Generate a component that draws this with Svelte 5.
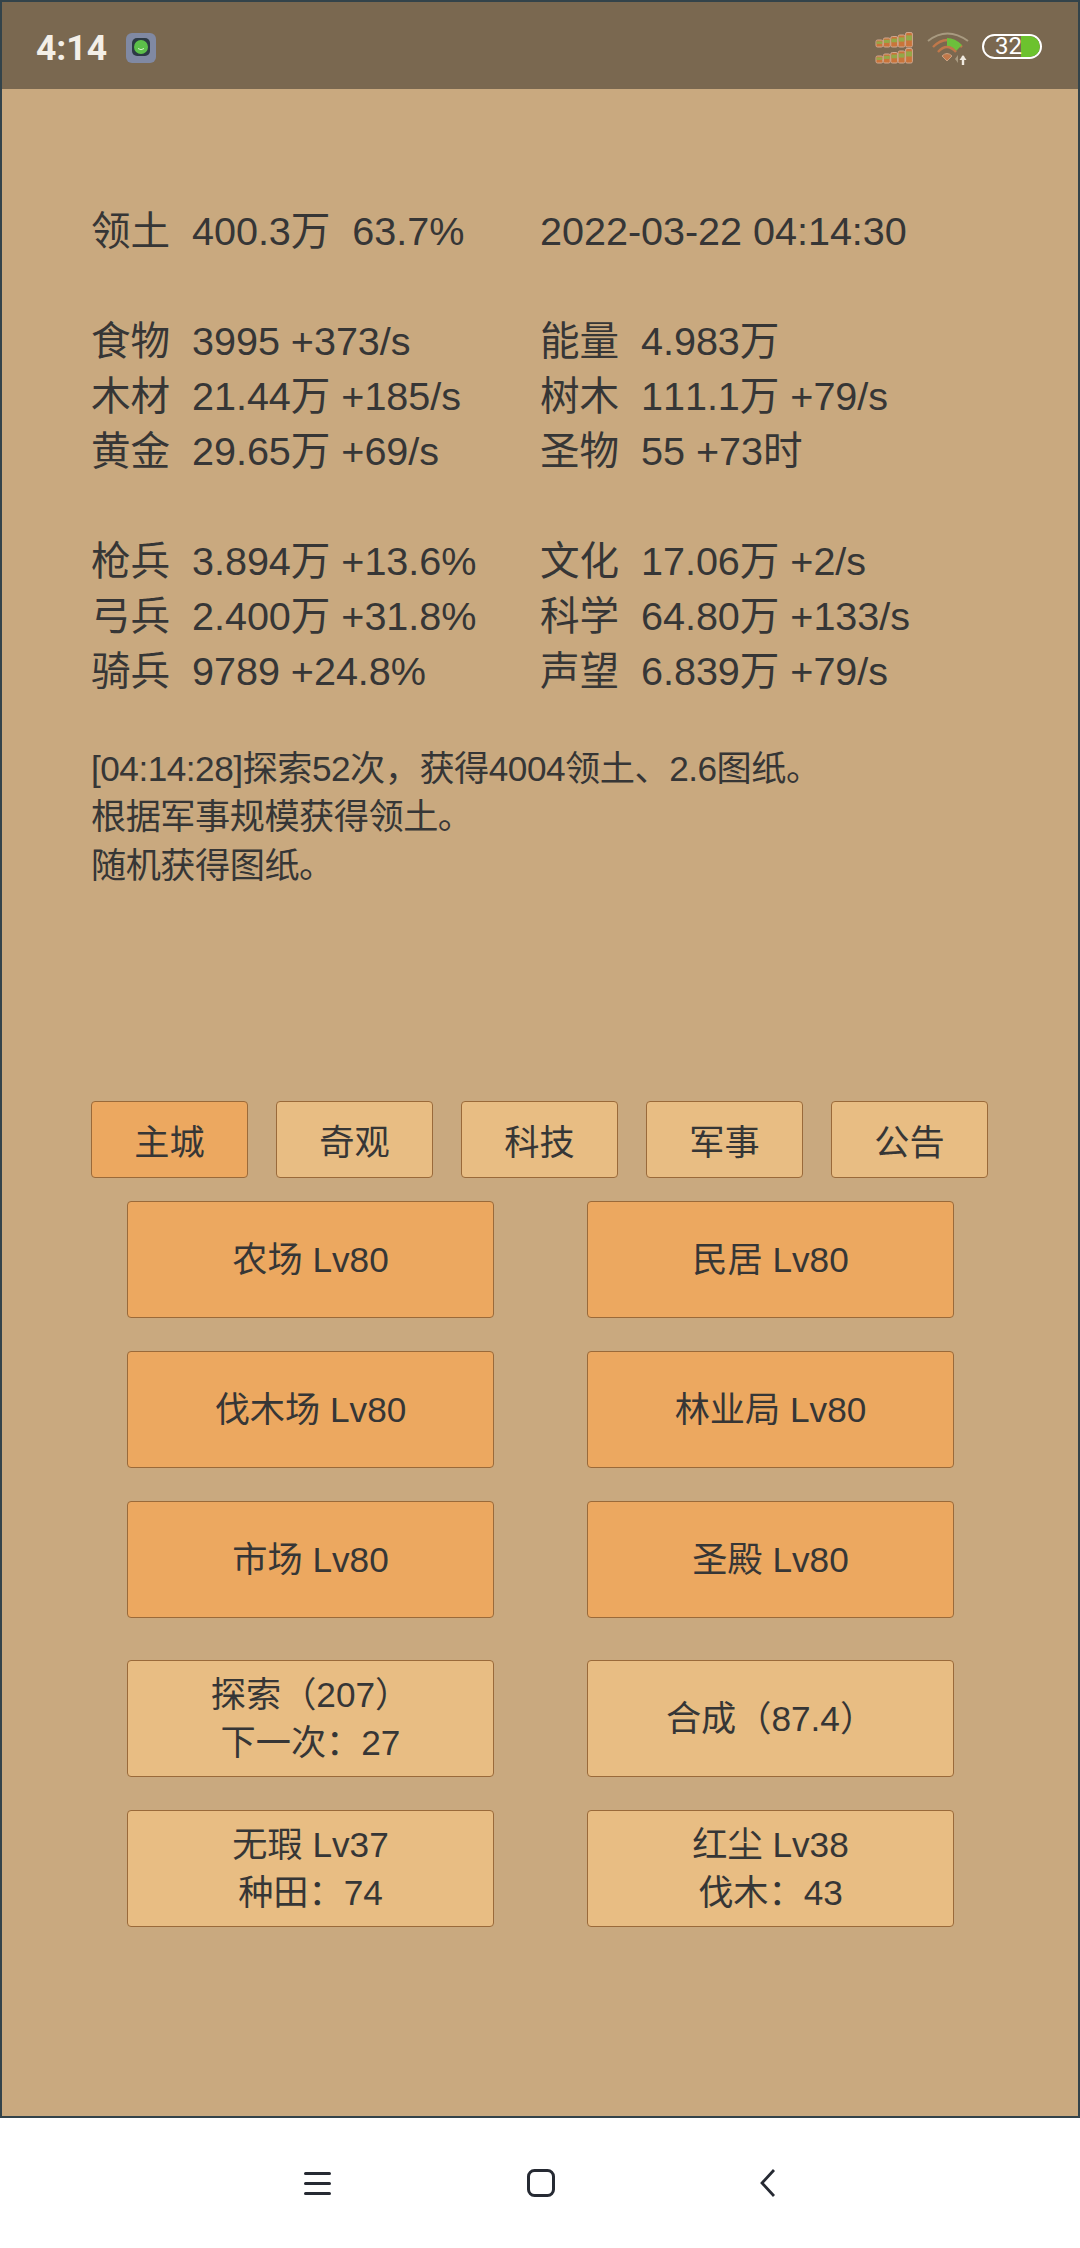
<script>
  const topRows = [
    [["食物", "3995 +373/s"], ["能量", "4.983万"]],
    [["木材", "21.44万 +185/s"], ["树木", "111.1万 +79/s"]],
    [["黄金", "29.65万 +69/s"], ["圣物", "55 +73时"]],
  ];
  const armyRows = [
    [["枪兵", "3.894万 +13.6%"], ["文化", "17.06万 +2/s"]],
    [["弓兵", "2.400万 +31.8%"], ["科学", "64.80万 +133/s"]],
    [["骑兵", "9789 +24.8%"], ["声望", "6.839万 +79/s"]],
  ];
  const tabs = ["主城", "奇观", "科技", "军事", "公告"];
  const buildings = ["农场 Lv80", "民居 Lv80", "伐木场 Lv80", "林业局 Lv80", "市场 Lv80", "圣殿 Lv80"];
  let active = "主城";
</script>

<div class="page">
  <div class="game">
    <header class="statusbar">
      <span class="time">4:14</span>
      <svg class="appicon" width="30" height="30" viewBox="0 0 30 30">
        <rect width="30" height="30" rx="6" fill="#8089a3" />
        <rect x="6" y="5" width="18" height="18" rx="5" fill="#2c3a44" />
        <circle cx="15" cy="14" r="7" fill="#5cc04a" />
        <path d="M12 15.5q3 2.5 6 0" stroke="#d8f5c8" stroke-width="1" fill="none" />
      </svg>
      <div class="status-right">
        <svg width="40" height="32" viewBox="0 0 40 32">
          {#each [0, 16] as dy}
            {#each [7, 9, 10.5, 12, 14.5] as h, i}
              <rect x={i * 7.4 + 1} y={15 - h + dy} width="6.8" height={h} rx="1.5" fill="#c9743a" stroke="#d0a890" stroke-width="1" />
              <rect x={i * 7.4 + 1.5} y={15 - h + dy + h * 0.2} width="5.8" height={h * 0.35} fill="#93a848" />
            {/each}
          {/each}
        </svg>
        <svg class="wifi" width="44" height="36" viewBox="0 0 44 36">
          <path d="M2 11Q21 -4 42 11" stroke="#a89a80" stroke-width="2" fill="none" />
          <path d="M7 17Q21 3 36 17" stroke="#c0784a" stroke-width="2.4" fill="none" />
          <path d="M21 8Q29 8 36 15L30 21Q26 16 21 16Z" fill="#6cbf3c" />
          <path d="M12 22Q21 12 30 22" stroke="#c0784a" stroke-width="2.4" fill="none" />
          <path d="M16 26Q21 21 26 26L21 31Z" fill="#c0784a" stroke="#c9a080" />
          <path d="M37 26v9" stroke="#efe9df" stroke-width="2.4" />
          <path d="M37 25l3.5 5h-7z" fill="#efe9df" />
          <path d="M32 25v8l-3-4z" fill="#a89a80" />
        </svg>
        <div class="battery"><i></i><span>32</span></div>
      </div>
    </header>

    <main class="content">
      <div class="stats">
        <div class="row">
          <pre>领土  400.3万  63.7%</pre>
          <pre>2022-03-22 04:14:30</pre>
        </div>
        <div class="row"></div>
        {#each topRows as r}
          <div class="row">
            {#each r as c}<pre>{c[0]}  {c[1]}</pre>{/each}
          </div>
        {/each}
        <div class="row"></div>
        {#each armyRows as r}
          <div class="row">
            {#each r as c}<pre>{c[0]}  {c[1]}</pre>{/each}
          </div>
        {/each}
      </div>

      <div class="log">
        <p>[04:14:28]探索52次，获得4004领土、2.6图纸。</p>
        <p>根据军事规模获得领土。</p>
        <p>随机获得图纸。</p>
      </div>

      <nav class="tabs">
        {#each tabs as t}
          <button class:on={active === t} on:click={() => (active = t)}>{t}</button>
        {/each}
      </nav>

      <div class="grid">
        {#each buildings as b}
          <button class="big on">{b}</button>
        {/each}
      </div>

      <div class="grid lower">
        <button class="big">探索（207）<br />下一次：27</button>
        <button class="big">合成（87.4）</button>
        <button class="big">无瑕 Lv37<br />种田：74</button>
        <button class="big">红尘 Lv38<br />伐木：43</button>
      </div>
    </main>
  </div>

  <footer class="navbar">
    <svg width="27" height="23" viewBox="0 0 27 23">
      <path d="M1.5 1.5h24M1.5 11.5h24M1.5 21.5h24" stroke="#262a33" stroke-width="3" stroke-linecap="round" />
    </svg>
    <svg class="home" width="28" height="28" viewBox="0 0 28 28">
      <rect x="1.5" y="1.5" width="25" height="25" rx="6" fill="none" stroke="#262a33" stroke-width="3" />
    </svg>
    <svg class="back" width="15" height="28" viewBox="0 0 15 28">
      <path d="M14 1L2 14l12 13" fill="none" stroke="#262a33" stroke-width="2.8" />
    </svg>
  </footer>
</div>

<style>
  :global(body) {
    margin: 0;
    background: #fff;
  }
  .page {
    width: 1080px;
    height: 2248px;
    display: flex;
    flex-direction: column;
    font-family: "Liberation Sans", "Noto Sans CJK SC", sans-serif;
    font-kerning: none;
    color: #363636;
  }
  .game {
    height: 2118px;
    box-sizing: border-box;
    border: 2px solid #33434a;
    background: #c9a97f;
  }
  .statusbar {
    height: 87px;
    box-sizing: border-box;
    background: #7a6850;
    display: flex;
    align-items: center;
    padding: 5px 36px 0 34px;
  }
  .time {
    font-family: Roboto, sans-serif;
    font-weight: 700;
    font-size: 35.5px;
    color: #f3efe8;
    margin-right: 19px;
  }
  .status-right {
    margin-left: auto;
    display: flex;
    align-items: center;
    gap: 11px;
  }
  .battery {
    position: relative;
    box-sizing: border-box;
    width: 60px;
    height: 25px;
    margin: 0 0 4px 1px;
    padding-left: 11px;
    border: 2.5px solid #fff;
    border-radius: 13px;
    overflow: hidden;
    display: flex;
    align-items: center;
  }
  .battery i {
    position: absolute;
    top: 0;
    bottom: 0;
    right: 0;
    width: 19px;
    background: #6cc22e;
    border-radius: 0 10px 10px 0;
  }
  .battery span {
    position: relative;
    font-family: Roboto, sans-serif;
    font-size: 24px;
    color: #fff;
  }
  .content {
    padding: 115px 0 0 89px;
  }
  .row {
    display: flex;
    height: 55px;
  }
  .row pre {
    margin: 0;
    font: inherit;
    font-size: 39.6px;
    line-height: 55px;
    letter-spacing: -0.04px;
    width: 449px;
    white-space: pre;
  }
  .log {
    margin-top: 46px;
    font-size: 35.2px;
    line-height: 48.4px;
    letter-spacing: -0.5px;
  }
  .log p {
    margin: 0;
  }
  .tabs {
    display: flex;
    gap: 28px;
    margin-top: 211px;
  }
  button {
    font: inherit;
    color: #363636;
    border: 1px solid #9a6a3a;
    border-radius: 4px;
    background: #e8bd83;
    padding: 0;
    margin: 0;
  }
  button.on {
    background: #eca860;
  }
  .tabs button {
    width: 157px;
    height: 77px;
    font-size: 35.2px;
  }
  .grid {
    display: grid;
    grid-template-columns: 367px 367px;
    column-gap: 93px;
    row-gap: 33px;
    margin: 23px 0 0 36px;
  }
  .big {
    height: 117px;
    font-size: 35.2px;
    line-height: 48.4px;
  }
  .lower {
    margin-top: 42px;
  }
  .lower .big {
    padding-top: 1px;
  }
  .navbar {
    flex: 1;
    display: flex;
    align-items: center;
    padding-left: 304px;
  }
  .home {
    margin-left: 196px;
  }
  .back {
    margin-left: 205px;
  }
</style>
